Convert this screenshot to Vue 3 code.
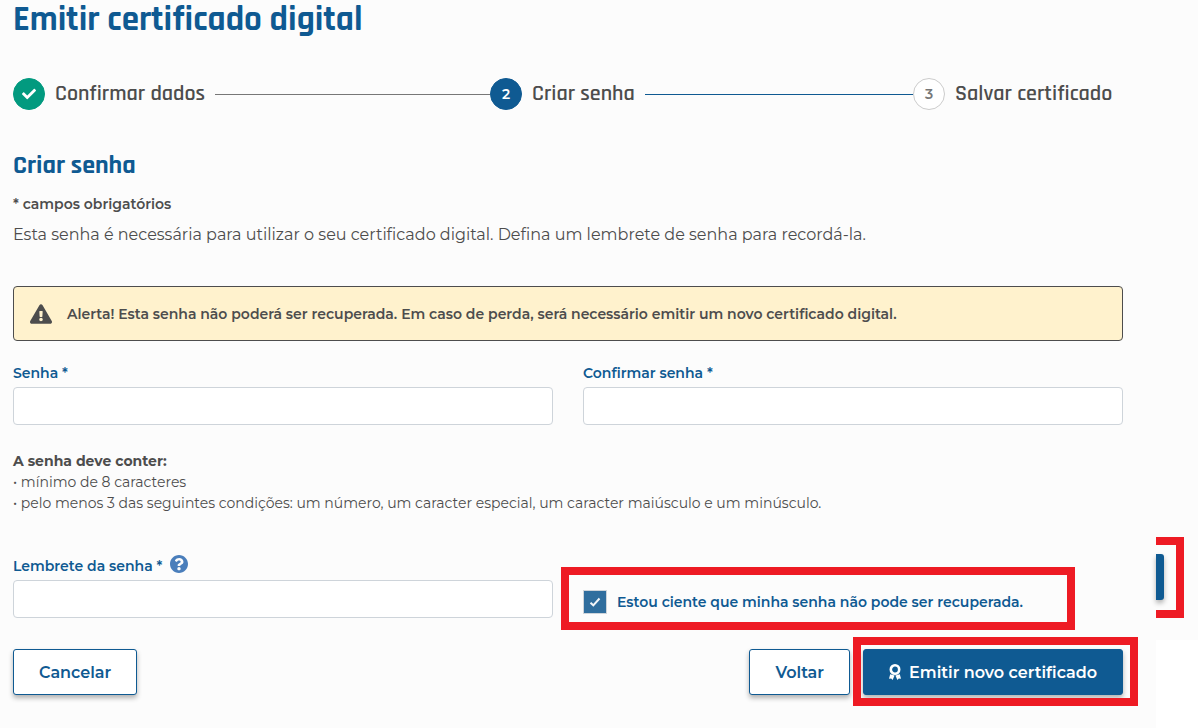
<script setup>
import { ref } from 'vue'

const password = ref('')
const confirmation = ref('')
const reminder = ref('')
const aware = ref(true)
</script>

<template>
  <div class="page">
    <main class="content">
      <h1>Emitir certificado digital</h1>

      <ol class="steps">
        <li class="step done">
          <span class="bullet">
            <svg viewBox="0 0 512 512" width="14" height="14" aria-hidden="true">
              <path d="M173.898 439.404l-166.4-166.4c-9.997-9.997-9.997-26.206 0-36.204l36.203-36.204c9.997-9.998 26.207-9.998 36.204 0L192 312.69 432.095 72.596c9.997-9.997 26.207-9.997 36.204 0l36.203 36.204c9.997 9.997 9.997 26.206 0 36.204l-294.4 294.401c-9.998 9.997-26.207 9.997-36.204-.001z" />
            </svg>
          </span>
          <span class="step-name">Confirmar dados</span>
          <span class="line"></span>
        </li>
        <li class="step current" aria-current="step">
          <span class="bullet">2</span>
          <span class="step-name">Criar senha</span>
          <span class="line"></span>
        </li>
        <li class="step">
          <span class="bullet">3</span>
          <span class="step-name">Salvar certificado</span>
        </li>
      </ol>

      <h2>Criar senha</h2>
      <p class="required">* campos obrigatórios</p>
      <p class="intro">Esta senha é necessária para utilizar o seu certificado digital. Defina um lembrete de senha para recordá-la.</p>

      <div class="alert" role="alert">
        <svg viewBox="0 0 576 512" width="22" height="20" aria-hidden="true">
          <path d="M569.517 440.013C587.975 472.007 564.806 512 527.94 512H48.054c-36.937 0-59.999-40.055-41.577-71.987L246.423 23.985c18.467-32.009 64.72-31.951 83.154 0l239.94 416.028zM288 354c-25.405 0-46 20.595-46 46s20.595 46 46 46 46-20.595 46-46-20.595-46-46-46zm-43.673-165.346l7.418 136c.347 6.364 5.609 11.346 11.982 11.346h48.546c6.373 0 11.635-4.982 11.982-11.346l7.418-136c.375-6.874-5.098-12.654-11.982-12.654h-63.383c-6.884 0-12.356 5.78-11.981 12.654z" />
        </svg>
        <span>Alerta! Esta senha não poderá ser recuperada. Em caso de perda, será necessário emitir um novo certificado digital.</span>
      </div>

      <form @submit.prevent>
        <div class="row">
          <div class="field">
            <label for="password">Senha *</label>
            <input id="password" v-model="password" type="password" />
          </div>
          <div class="field">
            <label for="confirmation">Confirmar senha *</label>
            <input id="confirmation" v-model="confirmation" type="password" />
          </div>
        </div>

        <div class="rules">
          <strong>A senha deve conter:</strong>
          <p>• mínimo de 8 caracteres</p>
          <p>• pelo menos 3 das seguintes condições: um número, um caracter especial, um caracter maiúsculo e um minúsculo.</p>
        </div>

        <div class="row">
          <div class="field">
            <div class="label-line">
              <label for="reminder">Lembrete da senha *</label>
              <button class="help" type="button" aria-label="Ajuda">
                <svg viewBox="8 8 496 496" width="18" height="18" aria-hidden="true">
                  <path d="M504 256c0 136.997-111.043 248-248 248S8 392.997 8 256C8 119.083 119.043 8 256 8s248 111.083 248 248zM262.655 90c-54.497 0-89.255 22.957-116.549 63.758-3.536 5.286-2.353 12.415 2.715 16.258l34.699 26.31c5.205 3.947 12.621 3.008 16.665-2.122 17.864-22.658 30.113-35.797 57.303-35.797 20.429 0 45.698 13.148 45.698 32.958 0 14.976-12.363 22.667-32.534 33.976C247.128 238.528 216 254.941 216 296v4c0 6.627 5.373 12 12 12h56c6.627 0 12-5.373 12-12v-1.333c0-28.462 83.186-29.647 83.186-106.667 0-58.002-60.165-102-116.531-102zM256 338c-25.365 0-46 20.635-46 46 0 25.364 20.635 46 46 46s46-20.636 46-46c0-25.365-20.635-46-46-46z" />
                </svg>
              </button>
            </div>
            <input id="reminder" v-model="reminder" type="text" />
          </div>
          <div class="consent">
            <span class="tick">
              <input id="aware" v-model="aware" type="checkbox" />
              <svg v-if="aware" viewBox="0 0 12 12" width="12" height="12" aria-hidden="true">
                <path d="M1.500 6.800L4.300 9.300L10.500 2.500" />
              </svg>
            </span>
            <label for="aware">Estou ciente que minha senha não pode ser recuperada.</label>
          </div>
        </div>

        <div class="actions">
          <button class="btn" type="button">Cancelar</button>
          <div class="forward">
            <button class="btn" type="button">Voltar</button>
            <div class="highlight">
              <button class="btn primary" type="submit">
                <svg viewBox="0 0 12 16" width="12" height="16" aria-hidden="true">
                  <circle cx="6" cy="5.500" r="4.200" fill="none" stroke="currentColor" stroke-width="2.600" />
                  <path d="M1.200 10.200L0 14.800l2.200-.2L3.600 16l2-4.600zM10.800 10.200L12 14.800l-2.200-.2L8.400 16l-2-4.600z" fill="currentColor" />
                </svg>
                <span>Emitir novo certificado</span>
              </button>
            </div>
          </div>
        </div>
      </form>
    </main>

    <aside class="edge" aria-hidden="true">
      <div class="edge-panel">
        <div class="edge-frame"><div class="edge-block"></div></div>
      </div>
    </aside>
  </div>
</template>

<style>
body {
  margin: 0;
  background: #fff;
}
</style>

<style scoped>
.page {
  display: grid;
  grid-template-columns: 1fr 42px;
  min-height: 100vh;
  color: #4d4d4d;
  font-family: Montserrat, Inter, "Open Sans", sans-serif;
  font-size: 14px;
}

.page *,
.page *::after {
  box-sizing: border-box;
}

.content {
  padding: 0 33px 32px 13px;
  background: #fcfcfc;
}

h1,
h2,
p,
ol {
  margin: 0;
  padding: 0;
}

h1,
h2,
.step-name {
  font-family: Rajdhani, Roboto, sans-serif;
  font-weight: 700;
}

h1 {
  color: #0f5a92;
  font-size: 35px;
  line-height: 40px;
}

h2 {
  margin-top: 40px;
  color: #0f5a92;
  font-size: 26px;
  line-height: 32px;
}

.steps {
  display: grid;
  grid-template-columns: 477fr 423fr 210fr;
  margin-top: 38px;
  list-style: none;
}

.step {
  display: flex;
  align-items: center;
  gap: 10px;
}

.bullet {
  display: flex;
  flex: none;
  align-items: center;
  justify-content: center;
  width: 32px;
  height: 32px;
  border: 1px solid #ccc;
  border-radius: 50%;
  background: #fff;
  color: #777;
  font-weight: 600;
}

.done .bullet {
  border-color: #029a7f;
  background: #029a7f;
  color: #fff;
}

.bullet svg {
  fill: currentColor;
}

.current .bullet {
  border-color: #0f5a92;
  background: #0f5a92;
  color: #fff;
}

.step-name {
  flex: none;
  font-size: 22px;
  font-weight: 600;
  line-height: 32px;
}

.line {
  flex: 1;
  height: 1px;
  background: #777;
}

.current .line {
  background: #0f5a92;
}

.required {
  margin-top: 12px;
  font-weight: 600;
  line-height: 20px;
}

.intro {
  margin-top: 9px;
  font-size: 16px;
  line-height: 24px;
}

.alert {
  display: flex;
  align-items: center;
  gap: 15px;
  min-height: 55px;
  margin-top: 39px;
  padding: 8px 16px;
  border: 1px solid #4d4d4d;
  border-radius: 4px;
  background: #fff2cd;
  font-weight: 600;
}

.alert svg {
  flex: none;
  fill: #4d4d4d;
}

.row {
  display: grid;
  grid-template-columns: 1fr 1fr;
  gap: 30px;
  margin-top: 22px;
}

label {
  color: #0f5a92;
  font-weight: 600;
  line-height: 20px;
}

.field {
  display: flex;
  flex-direction: column;
  gap: 4px;
}

.field input {
  width: 100%;
  height: 38px;
  padding: 6px 12px;
  border: 1px solid #ced4da;
  border-radius: 4px;
  background: #fff;
  font: inherit;
}

.rules {
  margin-top: 26px;
  line-height: 21px;
}

.rules strong {
  font-weight: 700;
}

.rules + .row {
  margin-top: 42px;
}

.label-line {
  display: flex;
  align-items: flex-start;
  gap: 8px;
  height: 20px;
}

.help {
  display: flex;
  margin-top: -1px;
  padding: 0;
  border: 0;
  background: none;
}

.help svg {
  fill: #4a7ebb;
}

.consent {
  position: relative;
  display: flex;
  align-items: center;
  align-self: end;
  gap: 10px;
  height: 32px;
}

.consent::after {
  position: absolute;
  inset: -19px 48px -12px -22px;
  border: 8px solid #ee1b24;
  content: "";
  pointer-events: none;
}

.tick {
  display: grid;
  place-items: center;
}

.tick > * {
  grid-area: 1 / 1;
}

.tick input {
  width: 24px;
  height: 24px;
  margin: 0;
  border: 1px solid #ced4da;
  background: #fff;
  appearance: none;
}

.tick input:checked {
  background: #306e9e;
}

.tick svg {
  fill: none;
  stroke: #f3f6f9;
  stroke-width: 2;
  pointer-events: none;
}

.actions,
.forward {
  display: flex;
  justify-content: space-between;
}

.actions {
  margin-top: 31px;
}

.forward {
  gap: 13px;
}

.btn {
  display: flex;
  align-items: center;
  gap: 8px;
  height: 46px;
  padding: 0 25px;
  border: 1px solid #0f5a92;
  border-radius: 3px;
  background: #fff;
  box-shadow: 0 3px 5px rgb(0 0 0 / 30%);
  color: #0f5a92;
  font-family: inherit;
  font-size: 16px;
  font-weight: 600;
}

.primary {
  background: #0f5a92;
  color: #fff;
}

.highlight {
  position: relative;
}

.highlight::after {
  position: absolute;
  inset: -12px -15px -11px -10px;
  border: 8px solid #ee1b24;
  content: "";
  pointer-events: none;
}

.edge-panel {
  padding: 537px 14px 22px 0;
  background: #fcfcfc;
}

.edge-frame {
  padding: 9px 12px 10px 0;
  border: 8px solid #ee1b24;
  border-left: 0;
}

.edge-block {
  height: 46px;
  border-radius: 0 3px 3px 0;
  background: #0f5a92;
  box-shadow: 0 3px 5px rgb(0 0 0 / 30%);
}
</style>
